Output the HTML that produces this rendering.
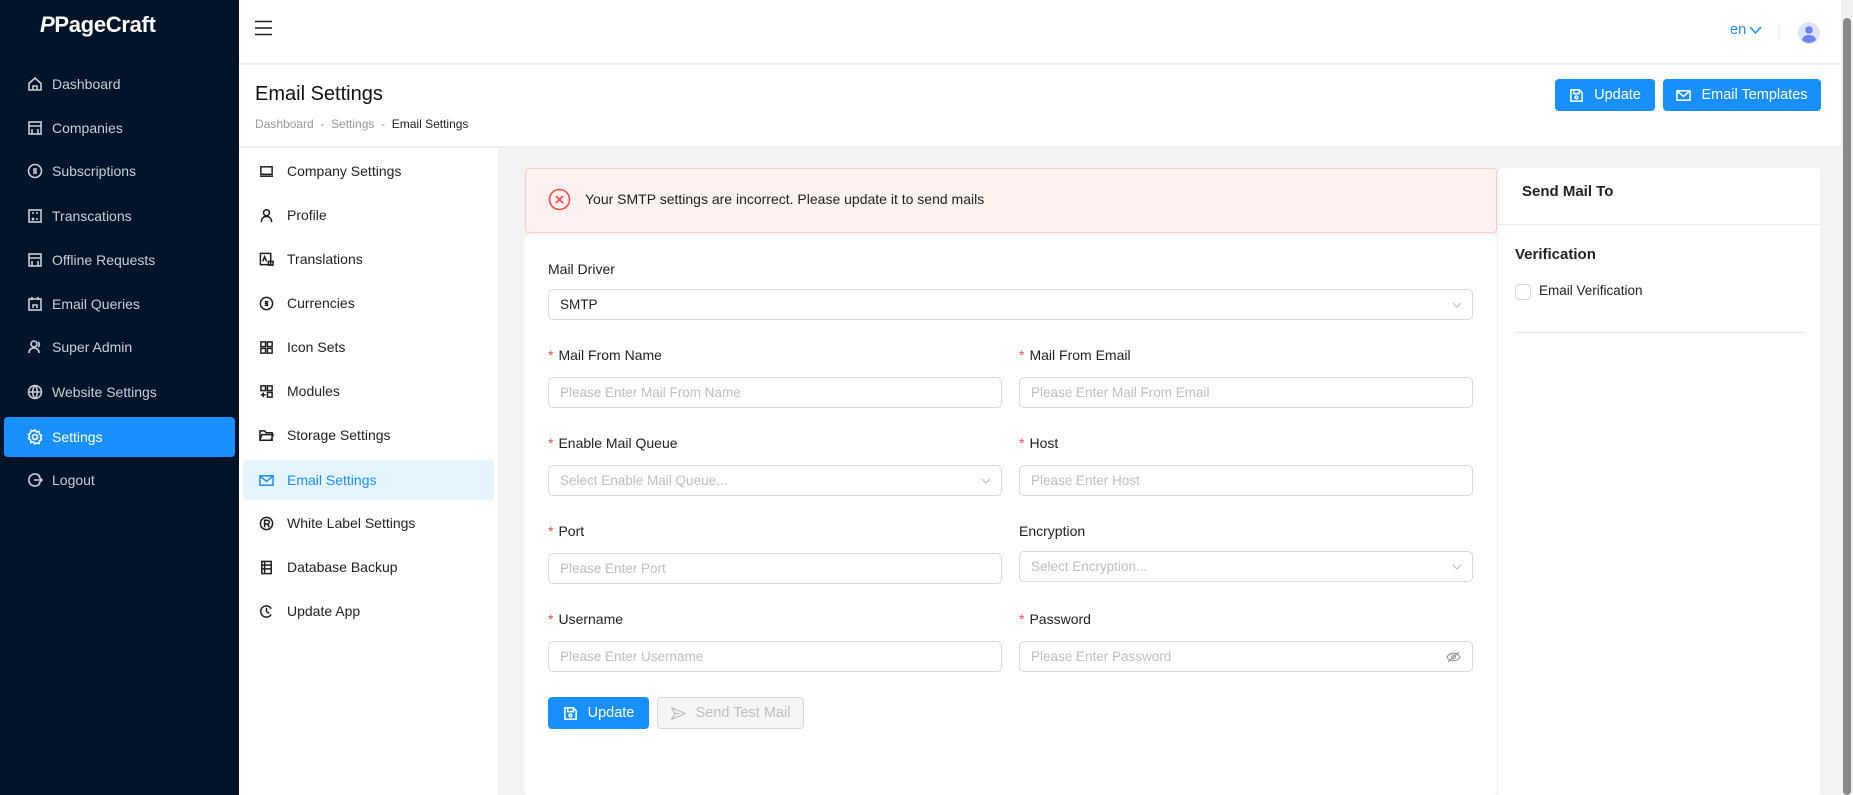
<!DOCTYPE html>
<html><head><meta charset="utf-8"><style>
*{box-sizing:border-box;margin:0;padding:0}
body{width:1853px;height:795px;overflow:hidden;background:#f3f3f3;font-family:"Liberation Sans",sans-serif;color:#1f1f1f;position:relative;font-size:14px}
.a{position:absolute}
#side{left:0;top:0;width:239px;height:795px;background:#011429}
.logo{left:40px;top:12px;color:#fff;font-weight:bold;font-size:22px;letter-spacing:-0.3px}
.si{left:4px;width:231px;height:40px;color:#c9ced6;font-size:14px;display:flex;align-items:center;padding-left:23px;border-radius:4px}
.si svg{width:16px;height:16px;margin-right:9px;stroke:#c9ced6;fill:none;stroke-width:1.6}
.si.act{background:#1890ff;color:#fff}
.si.act svg{stroke:#fff}
#top{left:239px;top:0;width:1602px;height:64px;background:#fff;border-bottom:1px solid #ececec}
#ph{left:239px;top:65px;width:1602px;height:82px;background:#fff;border-bottom:1px solid #ececec}
.btn{background:#1890ff;color:#fff;border-radius:4px;display:flex;align-items:center;justify-content:center;font-size:14.5px}
.btn svg{width:15px;height:15px;stroke:#fff;fill:none;stroke-width:1.6;margin-right:10px}
#sub{left:239px;top:148px;width:259px;height:647px;background:#fff}
.mi{left:243px;width:251px;height:40px;display:flex;align-items:center;padding-left:16px;font-size:14px;color:#1f1f1f;border-radius:4px}
.mi svg{width:15px;height:15px;margin-right:13px;stroke:#1f1f1f;fill:none;stroke-width:1.6}
.mi.act{background:#e6f4ff;color:#1890ff}
.mi.act svg{stroke:#1890ff}
.lbl{font-size:14px;color:#1f1f1f}
.lbl i{color:#ff4d4f;font-style:normal;margin-right:5px}
.inp{height:31px;border:1px solid #d9d9d9;border-radius:5px;background:#fff;font-size:13.5px;color:#bfbfbf;display:flex;align-items:center;padding-left:11px}
.chev{position:absolute;right:10px;top:10px;width:10px;height:10px}
</style></head><body>
<div id="side" class="a">
<div class="a logo"><span style="font-style:italic">P</span>PageCraft</div>
<div class="a si" style="top:64px"><svg viewBox="0 0 16 16"><path d="M2 7.5L8 2l6 5.5V14H2z M6 14v-4h4v4"/></svg>Dashboard</div>
<div class="a si" style="top:108px"><svg viewBox="0 0 16 16"><rect x="2" y="2" width="12" height="12"/><path d="M2 6h12M5 9v5M11 9v5"/></svg>Companies</div>
<div class="a si" style="top:151px"><svg viewBox="0 0 16 16"><circle cx="8" cy="8" r="6.5"/><path d="M10 6H7v2h2v2H6"/></svg>Subscriptions</div>
<div class="a si" style="top:196px"><svg viewBox="0 0 16 16"><rect x="2" y="2" width="12" height="12"/><path d="M5 5h2M9 5h2M5 10l2 2M7 10l-2 2M9 11h2"/></svg>Transcations</div>
<div class="a si" style="top:240px"><svg viewBox="0 0 16 16"><rect x="2" y="2" width="12" height="12"/><path d="M2 6h12M5 9v5M11 9v5"/></svg>Offline Requests</div>
<div class="a si" style="top:284px"><svg viewBox="0 0 16 16"><rect x="2" y="3" width="12" height="11"/><path d="M5 1v3M11 1v3M6 12v-3h4v3"/></svg>Email Queries</div>
<div class="a si" style="top:327px"><svg viewBox="0 0 16 16"><circle cx="7" cy="5" r="3"/><path d="M2 14c0-3 2-5 5-5s5 2 5 5M11 3a3 3 0 010 5"/></svg>Super Admin</div>
<div class="a si" style="top:372px"><svg viewBox="0 0 16 16"><circle cx="8" cy="8" r="6.5"/><path d="M1.5 8h13M8 1.5c-3 3-3 10 0 13M8 1.5c3 3 3 10 0 13"/></svg>Website Settings</div>
<div class="a si act" style="top:417px"><svg viewBox="0 0 16 16"><circle cx="8" cy="8" r="2.5"/><path d="M8 1l1.5 2 2.5-.5.5 2.5 2 1.5-1 2 1 2-2 1.5-.5 2.5-2.5-.5L8 15l-1.5-2-2.5.5-.5-2.5-2-1.5 1-2-1-2 2-1.5.5-2.5 2.5.5z"/></svg>Settings</div>
<div class="a si" style="top:460px"><svg viewBox="0 0 16 16"><path d="M13 5a6 6 0 100 6M7 8h8M12 5l3 3-3 3"/></svg>Logout</div>
</div>
<div id="top" class="a">
<svg class="a" style="left:16px;top:20px" width="18" height="16" viewBox="0 0 18 16"><path d="M0 1.5h17M0 8h17M0 14.5h17" stroke="#1f1f1f" stroke-width="1.6"/></svg>
<div class="a" style="left:1491px;top:22px;color:#1890ff;font-size:14.5px">en</div>
<svg class="a" style="left:1510px;top:26px" width="13" height="9" viewBox="0 0 13 9"><path d="M1 1l5.5 6L12 1" stroke="#1890ff" stroke-width="1.5" fill="none"/></svg>
<div class="a" style="left:1540px;top:24px;width:1px;height:16px;background:#e5e5e5"></div>
<svg class="a" style="left:1559px;top:22px" width="22" height="22" viewBox="0 0 22 22"><circle cx="11" cy="11" r="11" fill="#dde3fb"/><circle cx="11" cy="8" r="3.8" fill="#6b83ef"/><path d="M4 18c1-4 4-5 7-5s6 1 7 5a10 10 0 01-14 0z" fill="#6b83ef"/></svg>
</div>
<div id="ph" class="a">
<div class="a" style="left:16px;top:18px;font-size:20px;color:#111">Email Settings</div>
<div class="a" style="left:16px;top:52px;font-size:12px;color:#999">Dashboard &nbsp;-&nbsp; Settings &nbsp;-&nbsp; <span style="color:#222">Email Settings</span></div>
<div class="a btn" style="left:1316px;top:14px;width:100px;height:32px"><svg viewBox="0 0 16 16"><path d="M2 2h9l3 3v9H2z M5 2v4h6V2"/><circle cx="8" cy="10" r="1.5"/></svg>Update</div>
<div class="a btn" style="left:1424px;top:14px;width:158px;height:32px"><svg viewBox="0 0 16 16"><rect x="1" y="3" width="14" height="10"/><path d="M1 3l7 6 7-6"/></svg>Email Templates</div>
</div>
<div class="a" style="left:1841px;top:0;width:12px;height:795px;background:#f1f1f1"></div>
<div class="a" style="left:1843px;top:18px;width:8px;height:777px;background:#8a8a8a;border-radius:4px"></div>
<div id="sub" class="a"></div>
<div class="a mi" style="top:151px"><svg viewBox="0 0 16 16"><rect x="2" y="3" width="12" height="8"/><path d="M1 13h14"/></svg>Company Settings</div>
<div class="a mi" style="top:195px"><svg viewBox="0 0 16 16"><circle cx="8" cy="5" r="3.2"/><path d="M2.5 15c0-4 2.5-6 5.5-6s5.5 2 5.5 6"/></svg>Profile</div>
<div class="a mi" style="top:239px"><svg viewBox="0 0 16 16"><rect x="1.5" y="1.5" width="11" height="12"/><path d="M4 10l2-5 2 5M10 10h5v4h-5z"/></svg>Translations</div>
<div class="a mi" style="top:283px"><svg viewBox="0 0 16 16"><circle cx="8" cy="8" r="6.5"/><path d="M10 6H7v2h2v2H6"/></svg>Currencies</div>
<div class="a mi" style="top:327px"><svg viewBox="0 0 16 16"><rect x="2" y="2" width="5" height="5"/><rect x="9" y="2" width="5" height="5"/><rect x="2" y="9" width="5" height="5"/><rect x="9" y="9" width="5" height="5"/></svg>Icon Sets</div>
<div class="a mi" style="top:371px"><svg viewBox="0 0 16 16"><rect x="2" y="2" width="5" height="5"/><rect x="9" y="2" width="5" height="5"/><path d="M4.5 9v5M2 11.5h5"/><rect x="9" y="9" width="5" height="5"/></svg>Modules</div>
<div class="a mi" style="top:415px"><svg viewBox="0 0 16 16"><path d="M1 3h5l1.5 2H14v8H1z M1 13l2-6h12l-2 6"/></svg>Storage Settings</div>
<div class="a mi act" style="top:460px"><svg viewBox="0 0 16 16"><rect x="1" y="3" width="14" height="10"/><path d="M1 3l7 6 7-6"/></svg>Email Settings</div>
<div class="a mi" style="top:503px"><svg viewBox="0 0 16 16"><circle cx="8" cy="8" r="6.5"/><path d="M6 12V4.5h3a2 2 0 010 4H6M9 8.5l2 3.5"/></svg>White Label Settings</div>
<div class="a mi" style="top:547px"><svg viewBox="0 0 16 16"><rect x="3" y="1.5" width="10" height="13"/><path d="M3 5.5h10M3 9.5h10M6 1.5v13"/></svg>Database Backup</div>
<div class="a mi" style="top:591px"><svg viewBox="0 0 16 16"><path d="M13 11A6 6 0 1113 5M8 4v4l3 2"/></svg>Update App</div>
<div class="a" style="left:525px;top:168px;width:972px;height:65px;background:#fff1f0;border:1px solid #ffccc7;border-radius:4px"></div>
<svg class="a" style="left:548px;top:188px" width="23" height="23" viewBox="0 0 23 23"><circle cx="11.5" cy="11.5" r="10" stroke="#ff4d4f" stroke-width="1.6" fill="none"/><path d="M8 8l7 7M15 8l-7 7" stroke="#ff4d4f" stroke-width="1.6"/></svg>
<div class="a" style="left:585px;top:191px;font-size:14px">Your SMTP settings are incorrect. Please update it to send mails</div>
<div class="a" style="left:525px;top:235px;width:972px;height:560px;background:#fff;border-radius:4px"></div>
<div class="a lbl" style="left:548px;top:261px">Mail Driver</div>
<div class="a inp" style="left:548px;top:289px;width:925px;color:#1f1f1f">SMTP<svg class="chev" viewBox="0 0 10 10"><path d="M1 3l4 4 4-4" stroke="#bbb" fill="none"/></svg></div>
<div class="a lbl" style="left:548px;top:347px"><i>*</i>Mail From Name</div>
<div class="a lbl" style="left:1019px;top:347px"><i>*</i>Mail From Email</div>
<div class="a inp" style="left:548px;top:377px;width:454px">Please Enter Mail From Name</div>
<div class="a inp" style="left:1019px;top:377px;width:454px">Please Enter Mail From Email</div>
<div class="a lbl" style="left:548px;top:435px"><i>*</i>Enable Mail Queue</div>
<div class="a lbl" style="left:1019px;top:435px"><i>*</i>Host</div>
<div class="a inp" style="left:548px;top:465px;width:454px">Select Enable Mail Queue...<svg class="chev" viewBox="0 0 10 10"><path d="M1 3l4 4 4-4" stroke="#bbb" fill="none"/></svg></div>
<div class="a inp" style="left:1019px;top:465px;width:454px">Please Enter Host</div>
<div class="a lbl" style="left:548px;top:523px"><i>*</i>Port</div>
<div class="a lbl" style="left:1019px;top:523px">Encryption</div>
<div class="a inp" style="left:548px;top:553px;width:454px">Please Enter Port</div>
<div class="a inp" style="left:1019px;top:551px;width:454px">Select Encryption...<svg class="chev" viewBox="0 0 10 10"><path d="M1 3l4 4 4-4" stroke="#bbb" fill="none"/></svg></div>
<div class="a lbl" style="left:548px;top:611px"><i>*</i>Username</div>
<div class="a lbl" style="left:1019px;top:611px"><i>*</i>Password</div>
<div class="a inp" style="left:548px;top:641px;width:454px">Please Enter Username</div>
<div class="a inp" style="left:1019px;top:641px;width:454px">Please Enter Password<svg style="position:absolute;right:11px;top:8px" width="15" height="14" viewBox="0 0 15 14"><path d="M1 7c3-5 10-5 13 0-3 5-10 5-13 0zM2 12L13 2" stroke="#999" stroke-width="1.2" fill="none"/><circle cx="7.5" cy="7" r="2" stroke="#999" fill="none"/></svg></div>
<div class="a btn" style="left:548px;top:697px;width:101px;height:32px"><svg viewBox="0 0 16 16"><path d="M2 2h9l3 3v9H2z M5 2v4h6V2"/><circle cx="8" cy="10" r="1.5"/></svg>Update</div>
<div class="a" style="left:657px;top:697px;width:147px;height:32px;background:#f5f5f5;border:1px solid #d9d9d9;border-radius:4px;color:#bfbfbf;font-size:14.5px;display:flex;align-items:center;justify-content:center"><svg width="15" height="15" viewBox="0 0 16 16" style="margin-right:10px"><path d="M1 2l14 6-14 6 3-6zM4 8h5" stroke="#bbb" fill="none" stroke-width="1.3"/></svg>Send Test Mail</div>
<div class="a" style="left:1498px;top:168px;width:322px;height:627px;background:#fff;border-radius:4px"></div>
<div class="a" style="left:1498px;top:224px;width:322px;height:1px;background:#ececec"></div>
<div class="a" style="left:1522px;top:183px;font-size:15px;font-weight:bold;color:#222">Send Mail To</div>
<div class="a" style="left:1515px;top:246px;font-size:15px;font-weight:bold;color:#222">Verification</div>
<div class="a" style="left:1515px;top:284px;width:16px;height:16px;border:1px solid #d9d9d9;border-radius:4px"></div>
<div class="a" style="left:1539px;top:283px;font-size:13.5px">Email Verification</div>
<div class="a" style="left:1515px;top:332px;width:290px;height:1px;background:#e5e5e5"></div>
</body></html>
